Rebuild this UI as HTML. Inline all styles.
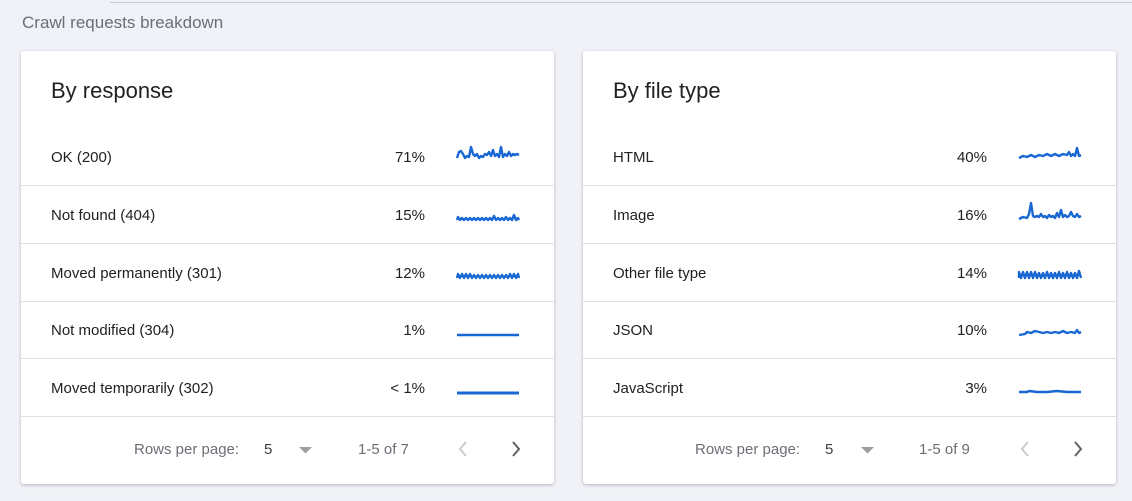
<!DOCTYPE html>
<html><head><style>
body{margin:0;width:1132px;height:501px;background:#f0f2f7;font-family:"Liberation Sans",sans-serif;position:relative;overflow:hidden}
.top{position:absolute;left:110px;right:0;top:2px;height:1px;background:#c9ccd3}
.h{position:absolute;left:22px;top:13px;font-size:17px;color:#6b6f75}
.card{position:absolute;top:51px;width:533px;height:433px;background:#fff;border-radius:3px;box-shadow:0 1px 3px rgba(0,0,0,.25)}
.t{position:absolute;left:30px;top:27px;font-size:22px;color:#202124}
.row{position:absolute;left:0;right:0;height:57px;border-bottom:1px solid #e0e0e0;font-size:15px;color:#202124}
.row .l{position:absolute;left:30px;top:21px}
.row .p{position:absolute;right:129px;top:21px}
.row svg{position:absolute;left:434px;top:14px}
.row polyline{stroke:#1967d2;stroke-width:2.4;stroke-linejoin:round}
.f{position:absolute;top:390px;font-size:15px;color:#6b6f75}
</style></head><body>
<div class="top"></div>
<div class="h">Crawl requests breakdown</div>

<div class="card" style="left:21px">
<div class="t">By response</div>
<div class="row" style="top:77px"><span class="l">OK (200)</span><span class="p">71%</span>
<svg width="70" height="24"><polyline fill="none" points="2,16 4,10 6,9 8,12 10,16 12,14 14,15 16,5 18,12 20,14 22,12 24,16 26,14 28,15 30,12 32,13 34,10 36,14 38,8 40,14 42,12 44,15 46,5 48,15 50,12 52,14 54,10 56,14 58,12 60,13 62,12 64,13"/></svg></div>
<div class="row" style="top:135px"><span class="l">Not found (404)</span><span class="p">15%</span>
<svg width="70" height="24"><polyline fill="none" points="2,20 3,17 5,20 7,18 9,20 11,18 13,20 15,18 17,20 19,18 21,20 23,18 25,20 27,18 29,20 31,18 33,20 35,18 37,20 39,16 41,20 43,18 45,20 47,18 49,20 51,17 53,20 55,18 57,20 59,15 61,20 63,18 64,20"/></svg></div>
<div class="row" style="top:193px"><span class="l">Moved permanently (301)</span><span class="p">12%</span>
<svg width="70" height="24"><polyline fill="none" points="2,20 3,16 5,20 7,16 9,20 11,16 13,20 15,16 17,20 19,17 21,20 23,17 25,20 27,17 29,20 31,17 33,20 35,17 37,20 39,17 41,20 43,17 45,20 47,17 49,20 51,17 53,20 55,16 57,20 59,16 61,20 63,16 64,20"/></svg></div>
<div class="row" style="top:250px"><span class="l">Not modified (304)</span><span class="p">1%</span>
<svg width="70" height="24"><polyline fill="none" points="2,20 64,20"/></svg></div>
<div class="row" style="top:308px"><span class="l">Moved temporarily (302)</span><span class="p">&lt; 1%</span>
<svg width="70" height="24"><polyline fill="none" style="stroke-width:3" points="2,20 64,20"/></svg></div>
<span class="f" style="left:113px">Rows per page:</span><span class="f" style="left:243px;color:#3c4043">5</span>
<svg style="position:absolute;left:278px;top:396px" width="14" height="8"><path d="M0 0 L13 0 L6.5 6.5Z" fill="#9e9e9e"/></svg>
<span class="f" style="left:337px">1-5 of 7</span>
<svg style="position:absolute;left:436px;top:389px" width="12" height="18"><path d="M9 2 L3 9 L9 16" fill="none" stroke="#ccc" stroke-width="2"/></svg>
<svg style="position:absolute;left:489px;top:389px" width="12" height="18"><path d="M3 2 L9 9 L3 16" fill="none" stroke="#5f6368" stroke-width="2"/></svg>
</div>

<div class="card" style="left:583px">
<div class="t">By file type</div>
<div class="row" style="top:77px"><span class="l">HTML</span><span class="p">40%</span>
<svg width="70" height="24"><polyline fill="none" points="2,16 6,14 10,15 14,13 18,15 22,13 26,14 30,12 34,14 38,12 42,14 46,12 50,13 52,10 54,14 56,12 58,14 60,6 62,14 64,13"/></svg></div>
<div class="row" style="top:135px"><span class="l">Image</span><span class="p">16%</span>
<svg width="70" height="24"><polyline fill="none" points="2,19 6,17 10,18 12,14 14,3 16,16 18,17 20,16 22,17 24,14 26,17 28,16 30,18 32,15 34,17 36,16 38,18 40,13 42,17 44,10 46,17 48,15 50,17 52,16 54,12 56,16 58,17 60,14 62,17 64,16"/></svg></div>
<div class="row" style="top:193px"><span class="l">Other file type</span><span class="p">14%</span>
<svg width="70" height="24"><polyline fill="none" points="2,20 2,14 4,20 6,14 8,20 10,14 12,20 14,14 16,20 18,14 20,20 22,15 24,20 26,15 28,20 30,14 32,20 34,15 36,20 38,15 40,20 42,14 44,20 46,15 48,20 50,14 52,20 54,15 56,20 58,15 60,20 62,13 64,20"/></svg></div>
<div class="row" style="top:250px"><span class="l">JSON</span><span class="p">10%</span>
<svg width="70" height="24"><polyline fill="none" points="2,20 8,19 10,17 14,18 18,16 22,17 26,18 30,17 34,18 38,17 42,18 46,16 50,18 54,17 58,18 60,15 62,18 64,17"/></svg></div>
<div class="row" style="top:308px"><span class="l">JavaScript</span><span class="p">3%</span>
<svg width="70" height="24"><polyline fill="none" points="2,19 10,19 12,18 20,19 30,19 40,18 50,19 64,19"/></svg></div>
<span class="f" style="left:112px">Rows per page:</span><span class="f" style="left:242px;color:#3c4043">5</span>
<svg style="position:absolute;left:278px;top:396px" width="14" height="8"><path d="M0 0 L13 0 L6.5 6.5Z" fill="#9e9e9e"/></svg>
<span class="f" style="left:336px">1-5 of 9</span>
<svg style="position:absolute;left:436px;top:389px" width="12" height="18"><path d="M9 2 L3 9 L9 16" fill="none" stroke="#ccc" stroke-width="2"/></svg>
<svg style="position:absolute;left:489px;top:389px" width="12" height="18"><path d="M3 2 L9 9 L3 16" fill="none" stroke="#5f6368" stroke-width="2"/></svg>
</div>
</body></html>
